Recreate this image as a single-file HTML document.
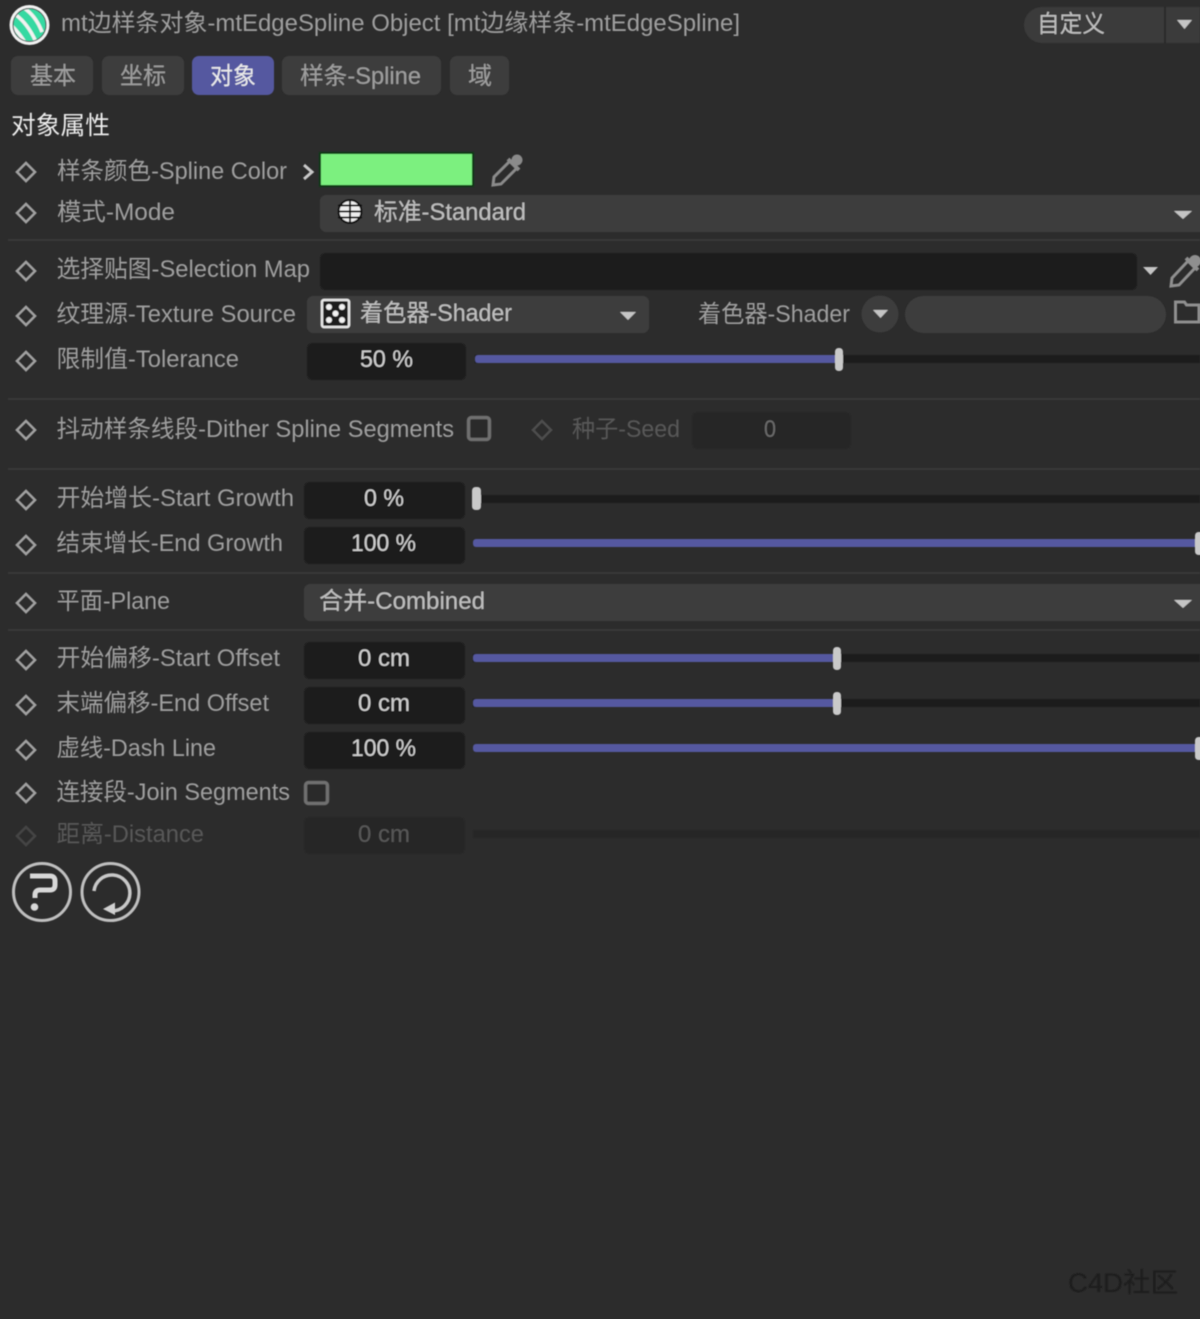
<!DOCTYPE html>
<html><head><meta charset="utf-8"><style>
html,body{margin:0;padding:0;background:#2c2c2c;width:1200px;height:1319px;overflow:hidden}
svg{display:block}
text{font-family:"Liberation Sans","Noto Sans CJK SC",sans-serif;font-size:24px;fill:#9f9f9f}
.w{fill:#c0c0c0}.d{fill:#585858}.v{fill:#d0d0d0}
.box{fill:#1b1b1b}.btn{fill:#3d3d3d}.sep{stroke:#373737;stroke-width:2}
.dia{fill:none;stroke:#a0a0a0;stroke-width:2.600}
.tri{fill:#c4c4c4}
</style></head><body>
<svg width="1200" height="1319" viewBox="0 0 1200 1319" xmlns="http://www.w3.org/2000/svg">
<defs><filter id="b" x="-2%" y="-2%" width="104%" height="104%"><feGaussianBlur stdDeviation="0.55"/></filter>
<clipPath id="lg"><circle cx="29.500" cy="25" r="16"/></clipPath></defs>
<rect width="1200" height="1319" fill="#2c2c2c"/>
<g filter="url(#b)">
<!-- logo -->
<circle cx="29.500" cy="25" r="20" fill="#f2f2f2"/>
<circle cx="29.500" cy="25" r="16" fill="#35d9a2"/>
<g clip-path="url(#lg)" fill="none" stroke="#f2f2f2" stroke-width="3.500">
<path d="M24 8Q36 16 42 32"/>
<path d="M16 15Q28 24 36 42"/>
<path d="M12 26Q20 34 26 44"/>
</g>
<circle cx="29.500" cy="25" r="16.500" fill="none" stroke="#1c3a32" stroke-width="1"/>
<text x="61" y="31" textLength="679" lengthAdjust="spacingAndGlyphs">mt边样条对象-mtEdgeSpline Object [mt边缘样条-mtEdgeSpline]</text>
<!-- preset -->
<path d="M1200 7H1042a18 18 0 0 0 0 36H1200z" fill="#3b3b3b"/>
<rect x="1164" y="7" width="2" height="36" fill="#2c2c2c"/>
<text class="w" x="1037" y="32" textLength="68" lengthAdjust="spacingAndGlyphs">自定义</text>
<path class="tri" d="M1177 20h15l-7.500 9z"/>
<!-- tabs -->
<rect class="btn" x="11" y="56" width="82" height="39" rx="7"/>
<rect class="btn" x="102" y="56" width="82" height="39" rx="7"/>
<rect x="192" y="56" width="82" height="39" rx="7" fill="#5458a0"/>
<rect class="btn" x="282" y="56" width="159" height="39" rx="7"/>
<rect class="btn" x="450" y="56" width="59" height="39" rx="7"/>
<text x="30" y="84" textLength="46" lengthAdjust="spacingAndGlyphs">基本</text>
<text x="120" y="84" textLength="46" lengthAdjust="spacingAndGlyphs">坐标</text>
<text x="210" y="84" textLength="46" lengthAdjust="spacingAndGlyphs" style="fill:#ececec">对象</text>
<text x="300" y="84" textLength="121" lengthAdjust="spacingAndGlyphs">样条-Spline</text>
<text x="468" y="84" textLength="24" lengthAdjust="spacingAndGlyphs">域</text>
<text x="11" y="134" textLength="99" lengthAdjust="spacingAndGlyphs" style="fill:#ececec;font-size:25px">对象属性</text>
<!-- color -->
<path class="dia" d="M26 163l9 9-9 9-9-9z"/>
<text x="57" y="179" textLength="230" lengthAdjust="spacingAndGlyphs">样条颜色-Spline Color</text>
<path d="M304 165l8 7-8 7" fill="none" stroke="#c8c8c8" stroke-width="3"/>
<rect x="319" y="152" width="155" height="35" fill="#0f3a12"/>
<rect x="321" y="154" width="151" height="31" fill="#7bf07f"/>
<path d="M493 185l1-8 16-16 7 7-16 16z" fill="none" stroke="#8a8a8a" stroke-width="3"/>
<path d="M508 159l11 11" stroke="#8a8a8a" stroke-width="4"/>
<circle cx="517" cy="160" r="5.500" fill="#8a8a8a"/>
<!-- mode -->
<path class="dia" d="M26 204l9 9-9 9-9-9z"/>
<text x="57" y="220" textLength="118" lengthAdjust="spacingAndGlyphs">模式-Mode</text>
<rect class="btn" x="320" y="195" width="890" height="37" rx="6"/>
<circle cx="350" cy="211.500" r="11.500" fill="#efefef" stroke="#111" stroke-width="2"/>
<path d="M338 205.500h24M338 211.500h24M338 217.500h24M350 200v23" stroke="#111" stroke-width="2"/>
<text class="w" x="374" y="220" textLength="152" lengthAdjust="spacingAndGlyphs">标准-Standard</text>
<path class="tri" d="M1174 211h18l-9 8z"/>
<line class="sep" x1="8" y1="240" x2="1200" y2="240"/>
<!-- selection map -->
<path class="dia" d="M26 262l9 9-9 9-9-9z"/>
<text x="56.500" y="277" textLength="253.500" lengthAdjust="spacingAndGlyphs">选择贴图-Selection Map</text>
<rect class="box" x="320" y="253" width="817" height="37" rx="6"/>
<path class="tri" d="M1143 267h15l-7.500 8z"/>
<path d="M1171 286l1-8 16-17 7 7-16 17z" fill="none" stroke="#8f8f8f" stroke-width="3"/>
<path d="M1186 258l12 12" stroke="#8f8f8f" stroke-width="4"/>
<circle cx="1195" cy="261" r="6" fill="#8f8f8f"/>
<!-- texture source -->
<path class="dia" d="M26 307l9 9-9 9-9-9z"/>
<text x="56.500" y="322" textLength="239.500" lengthAdjust="spacingAndGlyphs">纹理源-Texture Source</text>
<rect class="btn" x="307" y="296" width="342" height="37" rx="6"/>
<rect x="322" y="300" width="27" height="27" rx="2" fill="#1a1a1a" stroke="#e8e8e8" stroke-width="2.500"/>
<g fill="#f2f2f2"><circle cx="329" cy="307" r="3"/><circle cx="342" cy="307" r="3"/><circle cx="335.500" cy="313.500" r="3"/><circle cx="329" cy="320" r="3"/><circle cx="342" cy="320" r="3"/></g>
<text class="w" x="360" y="321" textLength="152" lengthAdjust="spacingAndGlyphs">着色器-Shader</text>
<path class="tri" d="M620 312h16l-8 8z"/>
<text x="698" y="322" textLength="152" lengthAdjust="spacingAndGlyphs">着色器-Shader</text>
<circle cx="880" cy="314" r="18.500" fill="#3d3d3d"/>
<path class="tri" d="M873 310h15l-7.500 8z"/>
<rect class="btn" x="905" y="296" width="261" height="37" rx="18.500"/>
<path d="M1175.500 322v-20h9l2 3h12.500v17z" fill="none" stroke="#8f8f8f" stroke-width="3"/>
<!-- tolerance -->
<path class="dia" d="M26 352l9 9-9 9-9-9z"/>
<text x="56.500" y="367" textLength="182.500" lengthAdjust="spacingAndGlyphs">限制值-Tolerance</text>
<rect class="box" x="307" y="343" width="159" height="37" rx="6"/>
<text class="v" x="360" y="367" textLength="53" lengthAdjust="spacingAndGlyphs">50 %</text>
<rect class="box" x="475" y="355" width="725" height="8"/>
<rect x="475" y="355" width="363" height="8" rx="3" fill="#5458a0"/>
<rect x="835" y="348" width="8" height="23" rx="3.500" fill="#c9c9c9"/>
<line class="sep" x1="8" y1="399" x2="1200" y2="399"/>
<!-- dither -->
<path class="dia" d="M26 421l9 9-9 9-9-9z"/>
<text x="56.500" y="437" textLength="397.500" lengthAdjust="spacingAndGlyphs">抖动样条线段-Dither Spline Segments</text>
<rect x="468.500" y="417.500" width="21" height="22" rx="3" fill="#2c2c2c" stroke="#6f6f6f" stroke-width="3.500"/>
<path d="M542 421l9 9-9 9-9-9z" fill="none" stroke="#4d4d4d" stroke-width="2.600"/>
<text class="d" x="572" y="437" textLength="108" lengthAdjust="spacingAndGlyphs">种子-Seed</text>
<rect x="692" y="412" width="159" height="37" rx="6" fill="#272727"/>
<text class="d" x="764" y="437" textLength="12" lengthAdjust="spacingAndGlyphs" style="fill:#6a6a6a">0</text>
<line class="sep" x1="8" y1="469" x2="1200" y2="469"/>
<!-- start growth -->
<path class="dia" d="M26 491l9 9-9 9-9-9z"/>
<text x="56.500" y="506" textLength="237.500" lengthAdjust="spacingAndGlyphs">开始增长-Start Growth</text>
<rect class="box" x="304" y="482" width="161" height="37" rx="6"/>
<text class="v" x="364" y="506" textLength="40" lengthAdjust="spacingAndGlyphs">0 %</text>
<rect class="box" x="473" y="495" width="727" height="8"/>
<rect x="472" y="487" width="9" height="23" rx="3.500" fill="#c9c9c9"/>
<!-- end growth -->
<path class="dia" d="M26 536l9 9-9 9-9-9z"/>
<text x="56.500" y="551" textLength="226.500" lengthAdjust="spacingAndGlyphs">结束增长-End Growth</text>
<rect class="box" x="304" y="527" width="161" height="37" rx="6"/>
<text class="v" x="351" y="551" textLength="65" lengthAdjust="spacingAndGlyphs">100 %</text>
<rect x="473" y="539" width="727" height="8" rx="3" fill="#5458a0"/>
<rect x="1195" y="532" width="9" height="23" rx="3.500" fill="#c9c9c9"/>
<line class="sep" x1="8" y1="573" x2="1200" y2="573"/>
<!-- plane -->
<path class="dia" d="M26 594l9 9-9 9-9-9z"/>
<text x="56.500" y="609" textLength="113.500" lengthAdjust="spacingAndGlyphs">平面-Plane</text>
<rect class="btn" x="304" y="584" width="910" height="37" rx="6"/>
<text class="w" x="319" y="609" textLength="166" lengthAdjust="spacingAndGlyphs">合并-Combined</text>
<path class="tri" d="M1174 600h18l-9 8z"/>
<line class="sep" x1="8" y1="630" x2="1200" y2="630"/>
<!-- start offset -->
<path class="dia" d="M26 651l9 9-9 9-9-9z"/>
<text x="56.500" y="666" textLength="223.500" lengthAdjust="spacingAndGlyphs">开始偏移-Start Offset</text>
<rect class="box" x="304" y="642" width="161" height="37" rx="6"/>
<text class="v" x="358" y="666" textLength="52" lengthAdjust="spacingAndGlyphs">0 cm</text>
<rect class="box" x="473" y="654" width="727" height="8"/>
<rect x="473" y="654" width="363" height="8" rx="3" fill="#5458a0"/>
<rect x="833" y="647" width="8" height="23" rx="3.500" fill="#c9c9c9"/>
<!-- end offset -->
<path class="dia" d="M26 696l9 9-9 9-9-9z"/>
<text x="56.500" y="711" textLength="212.500" lengthAdjust="spacingAndGlyphs">末端偏移-End Offset</text>
<rect class="box" x="304" y="687" width="161" height="37" rx="6"/>
<text class="v" x="358" y="711" textLength="52" lengthAdjust="spacingAndGlyphs">0 cm</text>
<rect class="box" x="473" y="699" width="727" height="8"/>
<rect x="473" y="699" width="363" height="8" rx="3" fill="#5458a0"/>
<rect x="833" y="692" width="8" height="23" rx="3.500" fill="#c9c9c9"/>
<!-- dash -->
<path class="dia" d="M26 741l9 9-9 9-9-9z"/>
<text x="56.500" y="756" textLength="159.500" lengthAdjust="spacingAndGlyphs">虚线-Dash Line</text>
<rect class="box" x="304" y="732" width="161" height="37" rx="6"/>
<text class="v" x="351" y="756" textLength="65" lengthAdjust="spacingAndGlyphs">100 %</text>
<rect x="473" y="744" width="727" height="8" rx="3" fill="#5458a0"/>
<rect x="1195" y="737" width="9" height="23" rx="3.500" fill="#c9c9c9"/>
<!-- join -->
<path class="dia" d="M26 784l9 9-9 9-9-9z"/>
<text x="56.500" y="800" textLength="233.500" lengthAdjust="spacingAndGlyphs">连接段-Join Segments</text>
<rect x="305.500" y="782.500" width="22" height="21" rx="3" fill="#2c2c2c" stroke="#6f6f6f" stroke-width="3.500"/>
<!-- distance -->
<path d="M26 827l9 9-9 9-9-9z" fill="none" stroke="#454545" stroke-width="2.600"/>
<text class="d" x="56.500" y="842" textLength="147.500" lengthAdjust="spacingAndGlyphs">距离-Distance</text>
<rect x="304" y="817" width="161" height="37" rx="6" fill="#272727"/>
<text class="d" x="358" y="842" textLength="52" lengthAdjust="spacingAndGlyphs">0 cm</text>
<rect x="473" y="830" width="727" height="8" fill="#272727"/>
<!-- help / reset -->
<circle cx="42" cy="892" r="28.500" fill="none" stroke="#bfbfbf" stroke-width="3"/>
<path d="M30 876H50q5 0 5 5v4q0 5-5 5H40q-5 0-5 5v3" fill="none" stroke="#d8d8d8" stroke-width="5"/>
<circle cx="34.500" cy="907" r="3.800" fill="#d8d8d8"/>
<circle cx="110.500" cy="892" r="28.500" fill="none" stroke="#bfbfbf" stroke-width="3"/>
<path d="M94 891A18 18 0 1 1 112 911" fill="none" stroke="#c8c8c8" stroke-width="3.500"/>
<path d="M103 909L115 902.500V915z" fill="#d0d0d0"/>
<!-- watermark -->
<text x="1068" y="1292" textLength="110" lengthAdjust="spacingAndGlyphs" style="fill:#1f1f1f;font-size:27px">C4D社区</text>
</g>
</svg>
</body></html>
